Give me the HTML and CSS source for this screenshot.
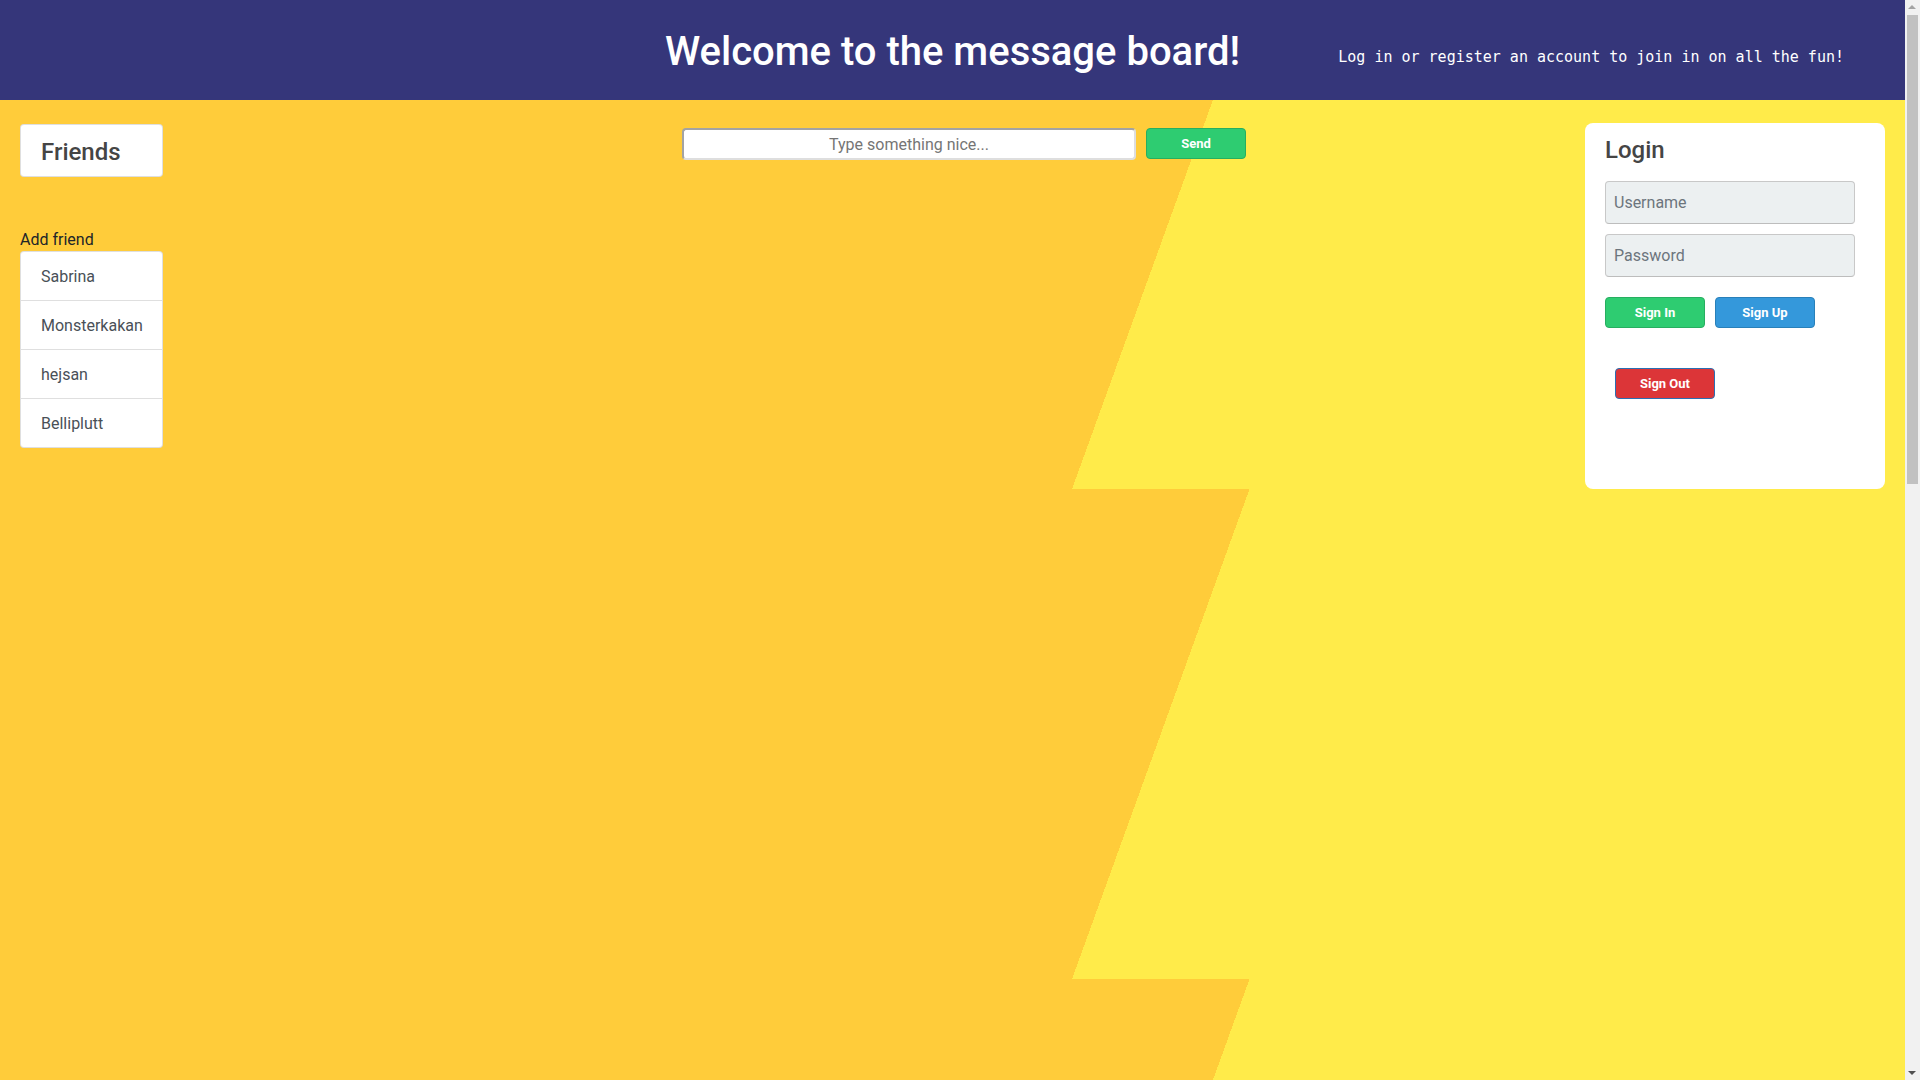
FILE: index.html
```html
<!DOCTYPE html>
<html lang="en">
<head>
<meta charset="utf-8">
<title>Message board</title>
<link rel="stylesheet" href="styles.css">
</head>
<body>
<div class="page">
  <header class="topbar">
    <div class="topbar-spacer"></div>
    <h1 class="title">Welcome to the message board!</h1>
    <p class="tagline">Log in or register an account to join in on all the fun!</p>
  </header>
  <main class="main">
    <aside class="friends">
      <div class="card friends-card"><h2 class="card-title">Friends</h2></div>
      <div class="add-friend">Add friend</div>
      <ul class="friend-list">
        <li class="friend-item">Sabrina</li>
        <li class="friend-item">Monsterkakan</li>
        <li class="friend-item">hejsan</li>
        <li class="friend-item">Belliplutt</li>
      </ul>
    </aside>
    <section class="composer">
      <input class="message-input" type="text" placeholder="Type something nice...">
      <button class="btn btn-green btn-send">Send</button>
    </section>
    <aside class="login-card">
      <h2 class="card-title login-title">Login</h2>
      <input class="login-input" type="text" placeholder="Username">
      <input class="login-input" type="password" placeholder="Password">
      <div class="login-buttons">
        <button class="btn btn-green">Sign In</button>
        <button class="btn btn-blue">Sign Up</button>
      </div>
      <button class="btn btn-red btn-signout">Sign Out</button>
    </aside>
  </main>
</div>
<div class="scrollbar" aria-hidden="true">
  <span class="scroll-arrow scroll-up"></span>
  <span class="scroll-thumb"></span>
  <span class="scroll-arrow scroll-down"></span>
</div>
</body>
</html>
```
FILE: styles.css
```css
html, body {
  margin: 0;
  padding: 0;
}
body {
  font-family: Roboto, "Liberation Sans", sans-serif;
  font-size: 16px;
  color: #212529;
  background: #f1f1f1;
}
.page {
  width: 1905px;
  min-height: 2410px;
  background-color: #ffcc3a;
  background-image:
    linear-gradient(109.91deg, #ffcc3a 234.6px, #ffeb4a 234.6px),
    linear-gradient(to right, #ffcc3a 1150px, #ffeb4a 1150px);
  background-size: 400px 490px, 100% 100%;
  background-position: 1000px -1px, 0 0;
  background-repeat: repeat-y, no-repeat;
}

.topbar {
  height: 100px;
  background: #35367a;
  display: grid;
  grid-template-columns: 1fr auto 1fr;
  align-items: start;
}
.title {
  margin: 28px 0 0;
  font-size: 40px;
  line-height: 47px;
  font-weight: 500;
  color: #ffffff;
  white-space: nowrap;
}
.tagline {
  justify-self: end;
  margin: 47px 61px 0 0;
  font-family: "DejaVu Sans Mono", monospace;
  font-size: 15px;
  line-height: 20px;
  color: #ffffff;
  white-space: nowrap;
}

.main {
  display: flex;
  align-items: flex-start;
  padding: 23px 20px 0;
}

.friends {
  width: 143px;
  margin-top: 1px;
}
.card {
  background: #fff;
  border: 1px solid rgba(0, 0, 0, 0.125);
  border-radius: 4px;
}
.friends-card {
  padding: 13px 20px 9px;
}
.card-title {
  margin: 0;
  font-size: 24px;
  line-height: 29px;
  font-weight: 500;
  color: #454545;
}
.add-friend {
  margin-top: 51px;
  line-height: 23px;
  font-size: 16px;
  color: #212529;
}
.friend-list {
  list-style: none;
  margin: 0;
  padding: 0;
}
.friend-item {
  background: #fff;
  border: 1px solid rgba(0, 0, 0, 0.125);
  margin-bottom: -1px;
  padding: 13px 20px 11px;
  line-height: 24px;
  color: #495057;
}
.friend-item:first-child {
  border-radius: 4px 4px 0 0;
}
.friend-item:last-child {
  border-radius: 0 0 4px 4px;
  margin-bottom: 0;
}

.composer {
  display: flex;
  align-items: flex-start;
  gap: 10px;
  margin-left: 519px;
  margin-top: 5px;
}
.message-input {
  box-sizing: border-box;
  width: 454px;
  height: 32px;
  border-width: 2px;
  border-style: solid;
  border-color: #a3a3a3 #dedede #dedede #a3a3a3;
  border-radius: 4px;
  background: #fff;
  font-family: Roboto, "Liberation Sans", sans-serif;
  font-size: 16px;
  text-align: center;
  padding: 1px 6px 0;
}
.message-input::placeholder {
  color: #757575;
}

.btn {
  box-sizing: border-box;
  width: 100px;
  height: 31px;
  border-radius: 4px;
  border: 1px solid;
  font-family: Roboto, "Liberation Sans", sans-serif;
  font-size: 13px;
  font-weight: 700;
  color: #fff;
  padding: 0;
}
.btn-green {
  background: #2ecc71;
  border-color: #27ae60;
}
.btn-blue {
  background: #3498db;
  border-color: #2980b9;
}
.btn-red {
  background: #dc3538;
  border-color: #2b6fb3;
}

.login-card {
  box-sizing: border-box;
  margin-left: auto;
  width: 300px;
  height: 366px;
  background: #fff;
  border-radius: 8px;
  padding: 13px 20px 12px;
  display: flex;
  flex-direction: column;
  align-items: flex-start;
}
.login-title {
  margin-bottom: 16px;
}
.login-input {
  box-sizing: border-box;
  width: 250px;
  height: 43px;
  margin-bottom: 10px;
  border: 1px solid #c8c8c8;
  border-bottom-color: #bdbdbd;
  border-radius: 4px;
  background: #ecf0f1;
  padding: 0 8px;
  font-family: Roboto, "Liberation Sans", sans-serif;
  font-size: 16px;
}
.login-input::placeholder {
  color: #6c757d;
}
.login-buttons {
  display: flex;
  gap: 10px;
  margin-top: 10px;
}
.btn-signout {
  margin-top: 40px;
  margin-left: 10px;
}

.scrollbar {
  position: fixed;
  top: 0;
  right: 0;
  width: 15px;
  height: 100vh;
  background: #f1f1f1;
}
.scroll-thumb {
  position: absolute;
  left: 2px;
  right: 2px;
  top: 15px;
  height: 469px;
  background: #c1c1c1;
}
.scroll-arrow {
  position: absolute;
  left: 3px;
  width: 0;
  height: 0;
  border-left: 4.5px solid transparent;
  border-right: 4.5px solid transparent;
}
.scroll-up {
  top: 5px;
  border-bottom: 4px solid #a3a3a3;
}
.scroll-down {
  bottom: 5px;
  border-top: 4px solid #505050;
}
```
